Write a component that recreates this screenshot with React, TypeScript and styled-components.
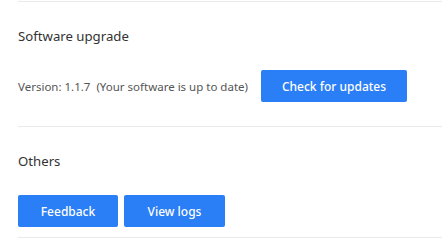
import React from "react";
import styled, { createGlobalStyle } from "styled-components";

const Global = createGlobalStyle`
  html, body { margin: 0; padding: 0; background: #ffffff; }
  body { font-family: "Noto Sans", "Open Sans", "Liberation Sans", sans-serif; }
`;

const Page = styled.div`
  padding: 1px 0 0 18px;
  width: 424px;
`;

const Section = styled.section`
  border-top: 1px solid #e9e9e9;
  padding: 24px 0 24px;
`;

const LastSection = styled(Section)`
  padding-bottom: 10px;
  border-bottom: 1px solid #e9e9e9;
`;

const Title = styled.div`
  font-size: 13.2px;
  line-height: 20px;
  color: #333333;
  margin-bottom: 24px;
`;

const Row = styled.div`
  display: flex;
  align-items: center;
  gap: 6px;
`;

const Version = styled.span`
  font-size: 11.5px;
  color: #555555;
  white-space: pre;
  margin-right: 7px;
`;

const Button = styled.button<{ $w: number }>`
  width: ${(p) => p.$w}px;
  height: 32px;
  border: none;
  border-radius: 2px;
  background: #2a7ef6;
  color: #ffffff;
  font-family: inherit;
  font-size: 12px;
  font-weight: 500;
  cursor: pointer;
  padding: 0;
`;

export default function App() {
  return (
    <>
      <Global />
      <Page>
        <Section>
          <Title>Software upgrade</Title>
          <Row>
            <Version>Version: 1.1.7  (Your software is up to date)</Version>
            <Button $w={146}>Check for updates</Button>
          </Row>
        </Section>
        <LastSection>
          <Title>Others</Title>
          <Row>
            <Button $w={100}>Feedback</Button>
            <Button $w={101}>View logs</Button>
          </Row>
        </LastSection>
      </Page>
    </>
  );
}
